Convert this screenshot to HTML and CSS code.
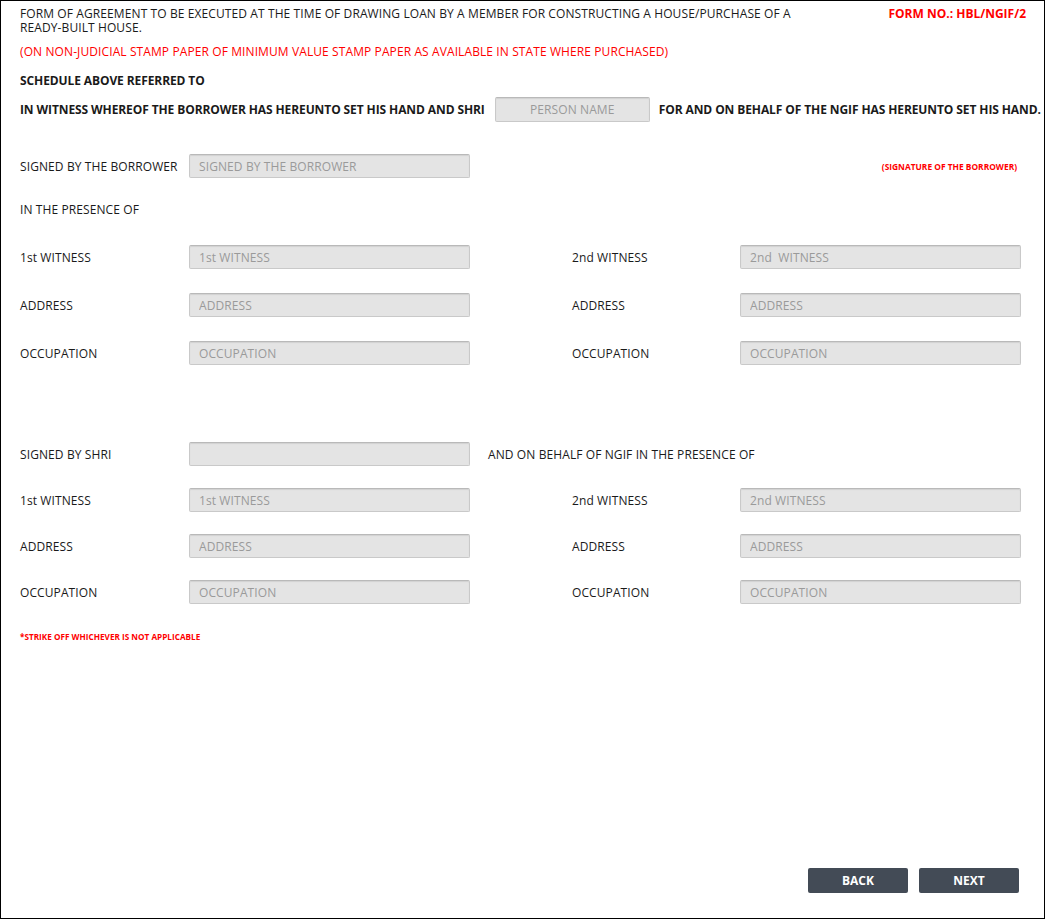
FILE: index.html
```html
<!DOCTYPE html>
<html>
<head>
<meta charset="utf-8">
<link rel="stylesheet" href="styles.css">
</head>
<body>
<div class="page">
  <div class="header">
    <div class="title">FORM OF AGREEMENT TO BE EXECUTED AT THE TIME OF DRAWING LOAN BY A MEMBER FOR CONSTRUCTING A HOUSE/PURCHASE OF A READY-BUILT HOUSE.</div>
    <div class="formno">FORM NO.: HBL/NGIF/2</div>
  </div>
  <div class="note">(ON NON-JUDICIAL STAMP PAPER OF MINIMUM VALUE STAMP PAPER AS AVAILABLE IN STATE WHERE PURCHASED)</div>
  <div class="schedule">SCHEDULE ABOVE REFERRED TO</div>
  <div class="witness-line">
    <span class="bold">IN WITNESS WHEREOF THE BORROWER HAS HEREUNTO SET HIS HAND AND SHRI</span>
    <input class="field person" type="text" placeholder="PERSON NAME">
    <span class="bold">FOR AND ON BEHALF OF THE NGIF HAS HEREUNTO SET HIS HAND.</span>
  </div>
  <div class="signed-row">
    <span class="label">SIGNED BY THE BORROWER</span>
    <input class="field" type="text" placeholder="SIGNED BY THE BORROWER">
    <span class="sig-note">(SIGNATURE OF THE BORROWER)</span>
  </div>
  <div class="presence">IN THE PRESENCE OF</div>

  <div class="grid grid-a">
    <span class="label">1st WITNESS</span>
    <input class="field" type="text" placeholder="1st WITNESS">
    <span></span>
    <span class="label">2nd WITNESS</span>
    <input class="field" type="text" placeholder="2nd  WITNESS">

    <span class="label">ADDRESS</span>
    <input class="field" type="text" placeholder="ADDRESS">
    <span></span>
    <span class="label">ADDRESS</span>
    <input class="field" type="text" placeholder="ADDRESS">

    <span class="label">OCCUPATION</span>
    <input class="field" type="text" placeholder="OCCUPATION">
    <span></span>
    <span class="label">OCCUPATION</span>
    <input class="field" type="text" placeholder="OCCUPATION">
  </div>

  <div class="grid grid-b">
    <span class="label">SIGNED BY SHRI</span>
    <input class="field" type="text">
    <span class="behalf">AND ON BEHALF OF NGIF IN THE PRESENCE OF</span>

    <span class="label">1st WITNESS</span>
    <input class="field" type="text" placeholder="1st WITNESS">
    <span></span>
    <span class="label">2nd WITNESS</span>
    <input class="field" type="text" placeholder="2nd WITNESS">

    <span class="label">ADDRESS</span>
    <input class="field" type="text" placeholder="ADDRESS">
    <span></span>
    <span class="label">ADDRESS</span>
    <input class="field" type="text" placeholder="ADDRESS">

    <span class="label">OCCUPATION</span>
    <input class="field" type="text" placeholder="OCCUPATION">
    <span></span>
    <span class="label">OCCUPATION</span>
    <input class="field" type="text" placeholder="OCCUPATION">
  </div>

  <div class="strike">*STRIKE OFF WHICHEVER IS NOT APPLICABLE</div>

  <div class="actions">
    <button class="btn" type="button">BACK</button>
    <button class="btn" type="button">NEXT</button>
  </div>
</div>
</body>
</html>
```

FILE: styles.css
```css
* { box-sizing: border-box; }
html, body { margin: 0; padding: 0; background: #fff; }
body {
  font-family: "Open Sans", "Noto Sans", Arial, sans-serif;
  font-size: 12px;
  color: #1a1a1a;
}
.page {
  width: 1045px;
  height: 919px;
  border: 1px solid #000;
  padding: 6px 0 0 19px;
  display: flex;
  flex-direction: column;
  overflow: hidden;
}
.header {
  display: flex;
  justify-content: space-between;
  align-items: flex-start;
}
.title {
  width: 800px;
  line-height: 14px;
  letter-spacing: 0.1px;
}
.formno {
  color: #ff0000;
  font-weight: 700;
  margin-right: 18px;
  line-height: 14px;
}
.note {
  color: #ff0000;
  margin-top: 9px;
  line-height: 16px;
  letter-spacing: 0.1px;
}
.schedule {
  font-weight: 700;
  margin-top: 13px;
  line-height: 16px;
  letter-spacing: -0.1px;
}
.bold { font-weight: 700; letter-spacing: -0.1px; white-space: nowrap; flex-shrink: 0; }
.witness-line {
  display: flex;
  align-items: center;
  margin-top: 8px;
}
.witness-line .person { flex-shrink: 0; width: 155px; height: 25px; margin: 0 9px 0 10px; text-align: center; }
.field {
  width: 281px;
  height: 24px;
  background: #e4e4e4;
  border: 1px solid #c9c9c9;
  border-top-color: #b9b9b9;
  border-radius: 2px;
  box-shadow: inset 0 1px 1px rgba(0,0,0,0.08);
  font-family: inherit;
  font-size: 12px;
  padding: 0 9px;
  color: #333;
  outline: none;
}
.field::placeholder { color: #9a9a9a; letter-spacing: 0.1px; }
.label { letter-spacing: 0.1px; }
.signed-row {
  display: flex;
  align-items: center;
  margin-top: 32px;
}
.signed-row .label { width: 169px; }
.sig-note {
  color: #ff0000;
  font-size: 8.4px;
  font-weight: 700;
  margin-left: auto;
  margin-right: 27px;
}
.presence {
  margin-top: 24px;
  letter-spacing: 0.1px;
  line-height: 16px;
}
.grid {
  display: grid;
  grid-template-columns: 169px 281px 102px 168px 281px;
  row-gap: 24px;
  align-items: center;
}
.grid-a { margin-top: 27px; }
.grid-b { margin-top: 77px; row-gap: 22px; }
.behalf {
  grid-column: 3 / 6;
  margin-left: 18px;
  letter-spacing: 0.1px;
}
.strike {
  color: #ff0000;
  font-size: 8.2px;
  font-weight: 700;
  margin-top: 27px;
}
.actions {
  margin-top: auto;
  margin-bottom: 25px;
  margin-right: 25px;
  display: flex;
  justify-content: flex-end;
  gap: 11px;
}
.btn {
  width: 100px;
  height: 25px;
  background: #434b56;
  color: #fff;
  border: none;
  border-radius: 2px;
  font-family: inherit;
  font-size: 12px;
  font-weight: 700;
}
```
